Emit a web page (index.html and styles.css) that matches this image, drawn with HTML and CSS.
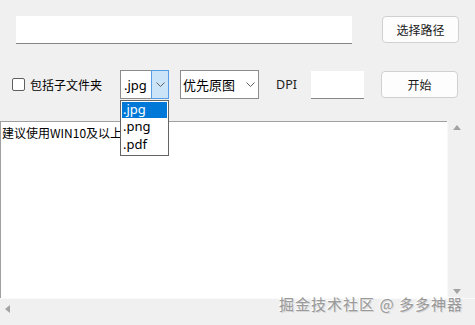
FILE: index.html
```html
<!DOCTYPE html>
<html lang="zh-CN">

<head>
    <meta charset="UTF-8">
    <meta name="viewport" content="width=device-width, initial-scale=1.0">
    <title>PDF转图片</title>
    <link rel="stylesheet" href="styles.css">
</head>

<body>
    <div class="app">
        <div class="row top-row">
            <div class="path-input"></div>
            <button class="btn path-btn">选择路径</button>
        </div>

        <div class="row opt-row">
            <label class="check"><span class="check-box"></span>包括子文件夹</label>

            <div class="combo fmt-combo">
                <span class="combo-text">.jpg</span>
                <span class="combo-arrow active">
                    <svg width="9" height="5" viewBox="0 0 9 5"><path d="M0.5 0.5 L4.5 4.5 L8.5 0.5" fill="none" stroke="#606060" stroke-width="1"/></svg>
                </span>
                <ul class="combo-list">
                    <li class="selected">.jpg</li>
                    <li>.png</li>
                    <li>.pdf</li>
                </ul>
            </div>

            <div class="combo mode-combo">
                <span class="combo-text">优先原图</span>
                <span class="combo-arrow">
                    <svg width="9" height="5" viewBox="0 0 9 5"><path d="M0.5 0.5 L4.5 4.5 L8.5 0.5" fill="none" stroke="#606060" stroke-width="1"/></svg>
                </span>
            </div>

            <span class="dpi-label">DPI</span>
            <div class="dpi-input"></div>
            <button class="btn start-btn">开始</button>
        </div>

        <div class="log">
            <div class="log-main">
                <div class="log-text">建议使用WIN10及以上</div>
                <div class="vscroll">
                    <span class="arrow-up"></span>
                    <span class="arrow-down"></span>
                </div>
            </div>
            <div class="hscroll">
                <span class="arrow-left"></span>
            </div>
        </div>

        <div class="watermark">掘金技术社区 @ 多多神器</div>
    </div>
</body>

</html>
```

FILE: styles.css
```css
body {
    margin: 0;
    background-color: #f0f0f0;
    font-family: "Noto Sans", "Noto Sans CJK SC", sans-serif;
    font-size: 12px;
    color: #000;
}

.app {
    position: relative;
    width: 475px;
    height: 325px;
    overflow: hidden;
}

.row {
    display: flex;
    align-items: center;
}

.top-row {
    padding: 16px 0 0 16px;
    height: 28px;
}

.path-input {
    width: 336px;
    height: 27px;
    background-color: #fff;
    border-bottom: 1px solid #868686;
}

.btn {
    height: 27px;
    width: 77px;
    padding: 0;
    background-color: #fdfdfd;
    border: 1px solid #d0d0d0;
    border-radius: 4px;
    font-family: "Noto Sans CJK SC", sans-serif;
    font-size: 12px;
    color: #1a1a1a;
}

.path-btn {
    margin-left: 30px;
    margin-top: -1px;
}

.opt-row {
    margin-top: 26px;
    height: 29px;
    padding-left: 12px;
}

.check {
    display: flex;
    align-items: center;
    width: 108px;
    font-family: "Noto Sans CJK SC", sans-serif;
}

.check-box {
    width: 11px;
    height: 11px;
    border: 1px solid #5f5f5f;
    border-radius: 2px;
    background-color: #fff;
    margin-right: 5px;
}

.combo {
    position: relative;
    display: flex;
    align-items: center;
    height: 27px;
    background-color: #fff;
    border: 1px solid #8c8c8c;
}

.fmt-combo {
    width: 47px;
}

.mode-combo {
    width: 77px;
    margin-left: 11px;
}

.combo-text {
    flex: 1;
    padding-left: 3px;
    font-size: 13px;
    font-family: "Noto Sans", "Noto Sans CJK SC", sans-serif;
}

.mode-combo .combo-text {
    padding-left: 2px;
    font-family: "Noto Sans CJK SC", sans-serif;
}

.combo-arrow {
    display: flex;
    align-items: center;
    justify-content: center;
    width: 16px;
    height: 27px;
}

.combo-arrow.active {
    background-color: #cce4f7;
    border: 1px solid #569de5;
    margin: -1px -1px -1px 0;
    height: 27px;
}

.combo-list {
    position: absolute;
    top: 29px;
    left: -1px;
    width: 45px;
    margin: 0;
    padding: 1px;
    list-style: none;
    background-color: #fff;
    border: 1px solid #646464;
}

.combo-list li {
    height: 18px;
    line-height: 17px;
    font-size: 13px;
    padding-left: 1px;
}

.combo-list li.selected {
    height: 16px;
    line-height: 15px;
    background-color: #0078d7;
    color: #fff;
}

.dpi-label {
    margin-left: 17px;
    width: 35px;
    font-size: 12.5px;
    color: #222;
}

.dpi-input {
    width: 53px;
    height: 27px;
    background-color: #fff;
    border-bottom: 1px solid #868686;
}

.start-btn {
    margin-left: 17px;
}

.log {
    margin-top: 22px;
}

.log-main {
    display: flex;
    height: 177px;
}

.log-text {
    width: 445px;
    background-color: #fff;
    border-top: 1px solid #a0a0a0;
    border-left: 1px solid #a0a0a0;
    padding: 3px 0 0 1px;
    font-family: "Noto Sans CJK SC", sans-serif;
    font-size: 12px;
    line-height: 16px;
}

.vscroll {
    position: relative;
    flex: 1;
    border-left: 1px solid #f8f8f8;
}

.arrow-up,
.arrow-down,
.arrow-left {
    position: absolute;
    width: 0;
    height: 0;
    border-style: solid;
    border-color: transparent;
}

.arrow-up {
    left: 5px;
    top: 4px;
    border-width: 0 4px 5px 4px;
    border-bottom-color: #a3a3a3;
}

.arrow-down {
    left: 5px;
    bottom: 4px;
    border-width: 5px 4px 0 4px;
    border-top-color: #a3a3a3;
}

.hscroll {
    position: relative;
    height: 20px;
    border-top: 1px solid #fafafa;
}

.arrow-left {
    left: 5px;
    top: 6px;
    border-width: 4px 5px 4px 0;
    border-right-color: #a3a3a3;
}

.watermark {
    position: absolute;
    right: 12px;
    bottom: 11px;
    font-family: "Noto Sans CJK SC", sans-serif;
    font-size: 15px;
    color: #9a9a9a;
    letter-spacing: 1px;
    text-shadow: 1px 1px 0 #d8d8d8, -1px -1px 0 #fff;
}
```
